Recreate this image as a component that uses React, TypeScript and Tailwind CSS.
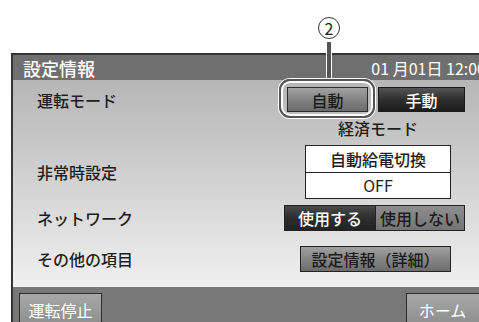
import React from "react";

const font = { fontFamily: '"Noto Sans CJK JP", "Noto Sans", sans-serif' };

export default function App() {
  return (
    <div
      className="relative w-[479px] h-[322px] bg-white overflow-hidden flex flex-col"
      style={font}
    >
      <div className="h-[53px] shrink-0" />
      <div className="ml-[11px] flex-1 flex flex-col border-l-2 border-t-2 border-[#353535] overflow-hidden">
        {/* header */}
        <div className="h-[25px] shrink-0 bg-[#6f6f6f] flex items-center justify-between overflow-hidden">
          <span className="pl-[10px] text-[18px] leading-none text-white font-medium">設定情報</span>
          <span className="-mr-[7px] text-[16px] leading-none text-white whitespace-nowrap">01 月01日 12:00</span>
        </div>
        {/* body */}
        <div className="h-[207px] shrink-0 bg-gradient-to-b from-[#b6b6b6] to-[#f0f0f0] flex flex-col pt-[7px] text-[16px] text-[#1e1e1e] font-medium">
          <div className="flex items-center h-[25px]">
            <div className="w-[274px] pl-[24px]">運転モード</div>
            <div className="w-[81px] h-[25px] flex items-center justify-center border border-[#2a2a2a] bg-gradient-to-b from-[#a2a2a2] via-[#848484] to-[#6a6a6a] text-[#1c1c1c]">自動</div>
            <div className="ml-[10px] w-[87px] h-[25px] flex items-center justify-center border border-[#1a1a1a] bg-gradient-to-b from-[#555] via-[#2f2f2f] to-[#1c1c1c] text-white">手動</div>
          </div>
          <div className="mt-[6px] h-[20px] flex">
            <div className="w-[292px]" />
            <div className="w-[146px] text-center leading-[20px]">経済モード</div>
          </div>
          <div className="mt-[7px] flex items-center h-[54px]">
            <div className="w-[292px] pl-[24px]">非常時設定</div>
            <div className="w-[146px] h-[54px] flex flex-col border-[1.5px] border-[#222] bg-white">
              <div className="flex-1 flex items-center justify-center border-b-[1.5px] border-[#222]">自動給電切換</div>
              <div className="flex-1 flex items-center justify-center font-normal">OFF</div>
            </div>
          </div>
          <div className="mt-[6px] flex items-center h-[26px]">
            <div className="w-[271px] pl-[24px]">ネットワーク</div>
            <div className="flex h-[26px] border border-[#222]">
              <div className="w-[90px] flex items-center justify-center bg-gradient-to-b from-[#4a4a4a] via-[#2e2e2e] to-[#222] text-white">使用する</div>
              <div className="w-[89px] flex items-center justify-center border-l border-[#222] bg-gradient-to-b from-[#8e8e8e] to-[#747474] text-[#1c1c1c]">使用しない</div>
            </div>
          </div>
          <div className="mt-[15px] flex items-center h-[26px]">
            <div className="w-[287px] pl-[24px]">その他の項目</div>
            <div className="w-[151px] h-[26px] flex items-center justify-center border border-[#222] bg-gradient-to-b from-[#a0a0a0] via-[#868686] to-[#6c6c6c] text-[#1c1c1c]">設定情報（詳細）</div>
          </div>
        </div>
        {/* footer */}
        <div className="flex-1 bg-[#787878] flex justify-between pt-[6px] pl-[6px] overflow-hidden">
          <div className="w-[83px] h-[34px] flex items-start pt-[4px] justify-center border border-[#2e2e2e] bg-gradient-to-b from-[#a8a8a8] to-[#8c8c8c] text-[16px] text-white">運転停止</div>
          <div className="w-[83px] h-[34px] shrink-0 -mr-[10px] flex items-start pt-[4px] pr-[10px] justify-center border border-[#2e2e2e] bg-gradient-to-b from-[#a8a8a8] to-[#8c8c8c] text-[16px] text-white">ホーム</div>
        </div>
      </div>

      {/* annotation callout */}
      <div className="absolute left-[318px] top-[17px] w-[22px] h-[22px] rounded-full border-[1.5px] border-[#333] bg-white flex items-center justify-center text-[16px] leading-none text-[#222]">2</div>
      <div className="absolute left-[327px] top-[42px] w-[4px] h-[38px] bg-[#555] shadow-[0_0_0_1px_white]" />
      <div className="absolute left-[279px] top-[79px] w-[96px] h-[39px] rounded-[11px] border-[2px] border-[#555] shadow-[inset_0_0_0_2px_white,0_0_0_1px_white]" />
    </div>
  );
}
